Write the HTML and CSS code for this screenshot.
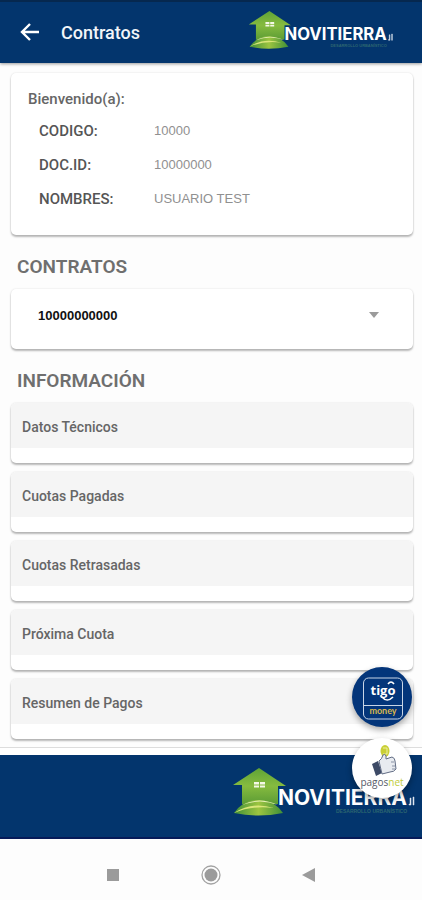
FILE: index.html
```html
<!DOCTYPE html>
<html lang="es">
<head>
<meta charset="utf-8">
<meta name="viewport" content="width=device-width, initial-scale=1">
<title>Contratos</title>
<link rel="stylesheet" href="styles.css">
</head>
<body>
<svg class="defs" aria-hidden="true">
  <defs>
    <linearGradient id="leaf" x1="0" y1="0" x2="0" y2="1">
      <stop offset="0" stop-color="#5fa336"/>
      <stop offset="0.5" stop-color="#86bb3f"/>
      <stop offset="1" stop-color="#5c9c35"/>
    </linearGradient>
    <linearGradient id="hill" x1="0" y1="0" x2="1" y2="0">
      <stop offset="0" stop-color="#3f8f38"/>
      <stop offset="0.5" stop-color="#9cc440"/>
      <stop offset="1" stop-color="#3f8f38"/>
    </linearGradient>
    <symbol id="novitierra" viewBox="0 0 184 50">
      <path d="M27 1 54 19H46V37H10V18H1Z" fill="url(#leaf)"/>
      <path d="M22 15h5v2.500h-5zM28 15h5v2.500h-5zM22 18.500h5v2h-5zM28 18.500h5v2h-5z" fill="#f4f8e6"/>
      <path d="M2 46Q12 32 28 33 43 34 51 46 26 51 2 46Z" fill="url(#hill)"/>
      <path d="M10 38Q27 29 46 38 28 31 10 38Z" fill="#e6efb4"/>
      <path d="M2 46Q20 34 42 41 20 38 2 46Z" fill="#dbe67a"/>
      <text x="46" y="38" class="logo-name">NOVITIERRA</text>
      <path d="M178 31h1v7h-2v-1h1zM181 30h1v8h-1z" fill="#dfe6ef" stroke="#dfe6ef" stroke-width=".5"/>
      <text x="104" y="46" class="logo-tag">DESARROLLO URBANÍSTICO</text>
    </symbol>
  </defs>
</svg>

<header class="topbar">
  <button class="back" type="button" aria-label="Volver">
    <svg viewBox="0 0 20 20" width="20" height="20"><path d="M19 9H2M10 1 2 9l8 8" fill="none" stroke="#fff" stroke-width="2.400"/></svg>
  </button>
  <h1>Contratos</h1>
  <svg class="logo logo-top" role="img" aria-label="Novitierra"><use href="#novitierra"/></svg>
</header>

<main>
  <section class="card welcome">
    <h2>Bienvenido(a):</h2>
    <dl>
      <dt>CODIGO:</dt><dd>10000</dd>
      <dt>DOC.ID:</dt><dd>10000000</dd>
      <dt>NOMBRES:</dt><dd>USUARIO TEST</dd>
    </dl>
  </section>

  <h2 class="title"><label for="contrato">CONTRATOS</label></h2>
  <div class="card picker">
    <select id="contrato"><option>10000000000</option></select>
    <svg class="caret" viewBox="0 0 10 6" width="10" height="6" aria-hidden="true"><path d="M0 0h10L5 6z" fill="#9b9b9b"/></svg>
  </div>

  <h2 class="title">INFORMACIÓN</h2>
  <div class="list">
    <button class="card item" type="button"><span>Datos Técnicos</span></button>
    <button class="card item" type="button"><span>Cuotas Pagadas</span></button>
    <button class="card item" type="button"><span>Cuotas Retrasadas</span></button>
    <button class="card item" type="button"><span>Próxima Cuota</span></button>
    <button class="card item" type="button"><span>Resumen de Pagos</span></button>
  </div>
</main>

<footer class="brand">
  <svg class="logo logo-bottom" role="img" aria-label="Novitierra"><use href="#novitierra"/></svg>
  <div class="fabs">
    <button class="fab tigo" type="button" aria-label="Tigo Money">
      <svg viewBox="0 0 60 60">
        <rect x="11.500" y="11" width="39" height="41" rx="5" fill="none" stroke="#c8d5e6"/>
        <path d="M12 38.500h38" stroke="#c8d5e6"/>
        <text x="31" y="28" class="tigo-name">tigo</text>
        <path d="M36 17q3-4 6 0M30 30q5 6 11 0" fill="none" stroke="#fff" stroke-width="1.600"/>
        <text x="31" y="47" class="tigo-money">money</text>
      </svg>
    </button>
    <button class="fab pagos" type="button" aria-label="PagosNet">
      <svg viewBox="0 0 60 60">
        <ellipse cx="33" cy="13" rx="4.500" ry="6" fill="#c9cf35"/>
        <path d="M31 10h4v6h-4" fill="none" stroke="#eef0a0"/>
        <path d="m20 26 6-3 4 12-6 3z" fill="#3d4a66"/>
        <path d="M27 23q3-2 4-6 2-2 3 1v3l6-2q3 1 3 4l1 8q-2 3-6 3l-8 2z" fill="#e8ebf0" stroke="#626d85"/>
        <path d="M39 24h3M40 28h3M40 31h3" stroke="#8992a5"/>
        <text x="30" y="48" class="pagos-name">pagos<tspan class="net">net</tspan></text>
      </svg>
    </button>
  </div>
</footer>

<nav class="system" aria-label="Sistema">
  <button type="button" aria-label="Recientes"><svg viewBox="0 0 20 20"><path d="M4 4h12v12H4z" fill="#9b9b9b"/></svg></button>
  <button type="button" aria-label="Inicio"><svg viewBox="0 0 20 20"><circle cx="10" cy="10" r="9" fill="none" stroke="#a3a3a3" stroke-width="1.300"/><circle cx="10" cy="10" r="6.500" fill="#9b9b9b"/></svg></button>
  <button type="button" aria-label="Atrás"><svg viewBox="0 0 20 20"><path d="M3 10 16 3v14z" fill="#9b9b9b"/></svg></button>
</nav>
</body>
</html>
```
FILE: styles.css
```css
* { box-sizing: border-box; }

body {
  margin: 0;
  min-height: 100vh;
  display: flex;
  flex-direction: column;
  background: #fdfdfd;
  color: #666;
  font-family: Roboto, "Liberation Sans", sans-serif;
}

h1, h2, dl, dd { margin: 0; }

button {
  padding: 0;
  border: 0;
  background: none;
  color: inherit;
  font: inherit;
  cursor: pointer;
}

svg { display: block; }

.defs { position: absolute; width: 0; height: 0; }

.topbar {
  display: flex;
  align-items: center;
  height: 63px;
  border-top: 2px solid #06284f;
  padding: 0 28px 0 20px;
  background: #03356d;
  box-shadow: 0 1px 3px #0006;
}

.topbar h1 {
  margin-left: 21px;
  color: #f2f5f9;
  font-size: 18px;
  font-weight: 500;
}

.logo-top { width: 146px; height: 40px; margin: 0 0 6px auto; }

.logo-name { fill: #fff; font: 700 21px Inter, sans-serif; }
.logo-tag { fill: #2d6670; font: 700 5px "Liberation Sans", sans-serif; }

main { padding: 10px 9px 9px 11px; }

.card {
  border-radius: 5px;
  background: #fff;
  box-shadow: 0 2px 2px #0004, 0 0 2px #0002;
}

.welcome { padding: 16px 17px 19px; }

.welcome h2 {
  font-size: 15px;
  font-weight: 500;
  line-height: 20px;
}

dl {
  display: grid;
  grid-template-columns: 115px 1fr;
  padding: 5px 0 0 11px;
  line-height: 34px;
}

dt { font-size: 15px; font-weight: 500; color: #555; }
dd { font: 13px/34px "Liberation Sans", sans-serif; color: #909090; }

.title {
  margin: 20px 6px 10px;
  font-size: 19px;
  font-weight: 600;
  line-height: 24px;
  color: #6f6f6f;
}

.picker { display: grid; align-items: center; height: 60px; }

.picker > * { grid-area: 1 / 1; }

select {
  width: 100%;
  height: 100%;
  padding: 0 60px 8px 27px;
  border: 0;
  appearance: none;
  background: none;
  color: #111;
  font: 700 13px "Liberation Sans", sans-serif;
}

.caret { justify-self: end; margin: 0 34px 8px 0; pointer-events: none; }

.list { display: grid; gap: 9px; }

.item {
  padding-bottom: 15px;
  overflow: hidden;
  text-align: left;
}

.item span {
  display: block;
  padding: 4px 11px 0;
  background: #f5f5f5;
  font-size: 14px;
  font-weight: 500;
  line-height: 41px;
}

.brand {
  position: relative;
  height: 84px;
  margin-top: 7px;
  border-bottom: 2px solid #061a58;
  padding: 12px 6px 0 0;
  background: #03356d;
  box-shadow: 0 -7px #fff, 0 -8px #ddd;
}

.logo-bottom { width: 184px; height: 50px; margin-left: auto; }

.fabs {
  position: absolute;
  right: 10px;
  bottom: 39px;
  display: grid;
  gap: 11px;
}

.fab {
  width: 60px;
  height: 60px;
  border-radius: 50%;
  box-shadow: 0 3px 6px #0005;
}

.tigo { background: #03357a; }
.pagos { background: #fff; }

.tigo-name { fill: #fff; font: 700 13px "Open Sans", sans-serif; text-anchor: middle; }
.tigo-money { fill: #d9b64a; font: 700 9px Lato, sans-serif; text-anchor: middle; }
.pagos-name { fill: #555b68; font: 10px "Open Sans", sans-serif; text-anchor: middle; }
.net { fill: #c0cc3a; }

.system {
  flex: 1;
  display: flex;
  justify-content: center;
  align-items: center;
  gap: 78px;
  padding-top: 11px;
}

.system svg { width: 20px; height: 20px; }
```
